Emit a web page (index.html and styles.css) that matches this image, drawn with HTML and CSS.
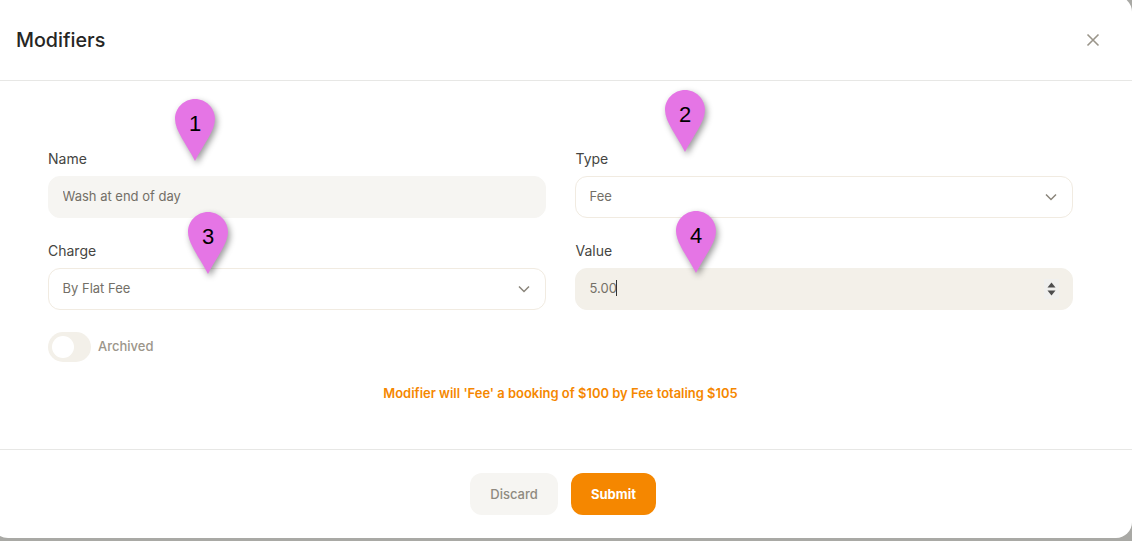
FILE: index.html
```html
<!DOCTYPE html>
<html lang="en">

<head>
    <meta charset="UTF-8">
    <meta name="viewport" content="width=device-width, initial-scale=1.0">
    <title>Modifiers</title>
    <link rel="stylesheet" href="styles.css">
</head>

<body>
    <div class="modal">
        <header class="modal-header">
            <h2>Modifiers</h2>
            <button class="close" type="button" aria-label="Close">
                <svg width="14" height="14" viewBox="0 0 14 14" fill="none" stroke="#9a958a" stroke-width="1.6">
                    <path d="M1.5 1.5l11 11M12.5 1.5l-11 11" />
                </svg>
            </button>
        </header>

        <form class="modal-body">
            <div class="form-grid">
                <div class="form-group">
                    <label for="name">Name</label>
                    <input class="field field-readonly" type="text" id="name" value="Wash at end of day" readonly>
                </div>
                <div class="form-group">
                    <label for="type">Type</label>
                    <div class="select-wrap">
                        <select class="field" id="type">
                            <option>Fee</option>
                        </select>
                        <svg class="chevron" width="12" height="8" viewBox="0 0 12 8" fill="none" stroke="#8a857a" stroke-width="1.5">
                            <path d="M1 1.5l5 5 5-5" />
                        </svg>
                    </div>
                </div>
                <div class="form-group">
                    <label for="charge">Charge</label>
                    <div class="select-wrap">
                        <select class="field" id="charge">
                            <option>By Flat Fee</option>
                        </select>
                        <svg class="chevron" width="12" height="8" viewBox="0 0 12 8" fill="none" stroke="#8a857a" stroke-width="1.5">
                            <path d="M1 1.5l5 5 5-5" />
                        </svg>
                    </div>
                </div>
                <div class="form-group">
                    <label for="value">Value</label>
                    <div class="select-wrap">
                        <input class="field field-active" type="number" id="value" value="5.00" step="0.01">
                        <span class="caret"></span>
                        <span class="spinner">
                            <svg width="9" height="14" viewBox="0 0 9 14" fill="#4d4d4d">
                                <path d="M4.5 0.5L8.5 5.5H0.5Z" />
                                <path d="M0.5 8.5H8.5L4.5 13.5Z" />
                            </svg>
                        </span>
                    </div>
                </div>
            </div>

            <div class="toggle-row">
                <span class="toggle"><span class="knob"></span></span>
                <span class="toggle-label">Archived</span>
            </div>

            <p class="message">Modifier will 'Fee' a booking of $100 by Fee totaling $105</p>
        </form>

        <footer class="modal-footer">
            <button class="btn btn-discard" type="button">Discard</button>
            <button class="btn btn-submit" type="button">Submit</button>
        </footer>
    </div>

    <div class="pin pin-1">
        <svg width="40" height="62" viewBox="0 0 40 62"><path d="M20 0C31 0 40 9 40 20C40 32 28 46 20 62C12 46 0 32 0 20C0 9 9 0 20 0Z" fill="#e575e5" /></svg>
        <span>1</span>
    </div>
    <div class="pin pin-2">
        <svg width="40" height="62" viewBox="0 0 40 62"><path d="M20 0C31 0 40 9 40 20C40 32 28 46 20 62C12 46 0 32 0 20C0 9 9 0 20 0Z" fill="#e575e5" /></svg>
        <span>2</span>
    </div>
    <div class="pin pin-3">
        <svg width="40" height="62" viewBox="0 0 40 62"><path d="M20 0C31 0 40 9 40 20C40 32 28 46 20 62C12 46 0 32 0 20C0 9 9 0 20 0Z" fill="#e575e5" /></svg>
        <span>3</span>
    </div>
    <div class="pin pin-4">
        <svg width="40" height="62" viewBox="0 0 40 62"><path d="M20 0C31 0 40 9 40 20C40 32 28 46 20 62C12 46 0 32 0 20C0 9 9 0 20 0Z" fill="#e575e5" /></svg>
        <span>4</span>
    </div>
</body>

</html>
```

FILE: styles.css
```css
* {
    box-sizing: border-box;
}

html,
body {
    height: 541px;
    margin: 0;
    overflow: hidden;
}

body {
    position: relative;
    font-family: Inter, "Liberation Sans", sans-serif;
    background-color: #a9a9a5;
}

.modal {
    width: 1140px;
    height: 542px;
    margin: -4px 0 0 -8px;
    background-color: white;
    border-radius: 16px;
    display: flex;
    flex-direction: column;
}

.modal-header {
    height: 85px;
    padding: 3px 32px 0 24px;
    border-bottom: 1px solid #e7e7e5;
    display: flex;
    justify-content: space-between;
    align-items: center;
    flex-shrink: 0;
}

.modal-header h2 {
    margin: 0;
    font-size: 19.7px;
    font-weight: 500;
    color: #262624;
}

.close {
    padding: 0;
    border: none;
    background: none;
    display: flex;
    cursor: pointer;
}

.modal-body {
    flex: 1;
    padding: 69px 59px 0 56px;
}

.form-grid {
    display: grid;
    grid-template-columns: 498px 498px;
    column-gap: 29px;
    row-gap: 24px;
}

.form-group label {
    display: block;
    height: 17px;
    margin-bottom: 9px;
    font-size: 14px;
    line-height: 17px;
    color: #454542;
}

.form-group:nth-child(even) label {
    padding-left: 0.5px;
}

.field {
    display: block;
    width: 100%;
    height: 42px;
    padding: 0 13.5px 2px;
    border: 1px solid #f1ebe1;
    border-radius: 12px;
    background-color: white;
    font-family: inherit;
    font-size: 13px;
    color: #736f67;
    outline: none;
    appearance: none;
}

.field-readonly {
    border-color: #f6f5f2;
    background-color: #f6f5f2;
}

.field-active {
    border-color: #f3f0e9;
    background-color: #f3f0e9;
}

.field-active::-webkit-inner-spin-button {
    display: none;
}

.select-wrap {
    position: relative;
}

.chevron {
    position: absolute;
    top: 17px;
    right: 16px;
    pointer-events: none;
}

.caret {
    position: absolute;
    top: 12px;
    left: 41px;
    width: 1px;
    height: 16px;
    background-color: #333;
}

.spinner {
    position: absolute;
    top: 11px;
    right: 14px;
    width: 15px;
    height: 20px;
    background-color: #f0f0ee;
    display: flex;
    align-items: center;
    justify-content: center;
}

.toggle-row {
    margin-top: 22px;
    display: flex;
    align-items: center;
    gap: 7px;
}

.toggle {
    width: 43px;
    height: 30px;
    padding: 4px;
    border-radius: 15px;
    background-color: #f3f0e9;
    display: block;
}

.knob {
    display: block;
    width: 22px;
    height: 22px;
    border-radius: 50%;
    background-color: white;
}

.toggle-label {
    margin-top: -2px;
    font-size: 13px;
    font-weight: 500;
    color: #9c968a;
}

.message {
    margin: 23px 0 0;
    text-align: center;
    font-size: 12.95px;
    line-height: 16px;
    font-weight: 600;
    color: #f58700;
}

.modal-footer {
    height: 89px;
    padding: 23px 0 0 2px;
    border-top: 1px solid #e7e7e5;
    display: flex;
    justify-content: center;
    gap: 13px;
    flex-shrink: 0;
}

.btn {
    height: 42px;
    border: none;
    border-radius: 12px;
    font-family: inherit;
    font-size: 13px;
    cursor: pointer;
}

.btn-discard {
    width: 88px;
    background-color: #f6f5f2;
    color: #8f8a80;
    font-weight: 500;
}

.btn-submit {
    width: 85px;
    background-color: #f58700;
    color: white;
    font-weight: 700;
}

.pin {
    position: absolute;
    width: 40px;
    height: 62px;
}

.pin svg {
    display: block;
    overflow: visible;
    filter: drop-shadow(2px 3px 3px rgba(0, 0, 0, 0.4));
}

.pin span {
    position: absolute;
    top: 13px;
    left: 0;
    width: 100%;
    text-align: center;
    font-family: "Liberation Sans", Arial, sans-serif;
    font-size: 22px;
    line-height: 24px;
    color: black;
}

.pin-1 {
    left: 175px;
    top: 99px;
}

.pin-2 {
    left: 665px;
    top: 90px;
}

.pin-3 {
    left: 188px;
    top: 212px;
}

.pin-4 {
    left: 676px;
    top: 211px;
}
```
